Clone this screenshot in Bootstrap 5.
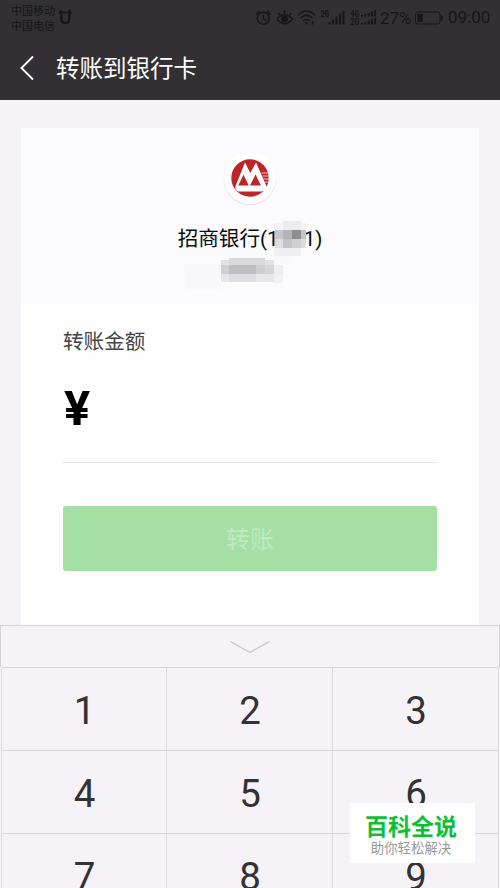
<!DOCTYPE html>
<html lang="zh-CN">
<head>
<meta charset="utf-8">
<meta name="viewport" content="width=device-width, initial-scale=1">
<title>转账到银行卡</title>
<link rel="stylesheet" href="https://cdn.jsdelivr.net/npm/bootstrap@5.3.0/dist/css/bootstrap.min.css">
<style>
body{font-family:Roboto,"Noto Sans CJK SC",sans-serif;background:#f5f3f7;color:#111}
.screen{width:500px;height:888px}
.topbar{height:100px;background:#333033}
.status{height:35px;color:#171517}
.carriers{font-size:11px;line-height:15px;padding:4px 0 0 11px;width:59px}
.alarm-u{margin-top:9px}
.status-right{padding-right:10px}
.battery-pct{font-size:17px;width:35px;padding-left:1px;line-height:20px}
.clock{font-size:17px;width:43px;padding-left:1px}
.status svg{flex:none;display:block}
.titlebar{height:65px;padding-left:19px}
.title{font-size:23.5px;line-height:34px;color:#fff;font-weight:400;margin-left:21px;padding-top:2px}
.panel{width:458px;height:497px;margin:28px auto 0 21px;background:#fefefe;border-radius:4px 4px 0 0}
.bank{height:176px;background:#fbfafd;padding-top:24px}
.logo-ring{width:52px;height:52px;background:#fff;box-shadow:0 1px 1px #dfdce2}
.bank-name{font-size:20.6px;line-height:30px;margin-top:20px;color:#0c0c0c}
.hidden-digits{width:25px}
.mosaic{left:164px;top:88px}
.form-part{padding:0 42px}
.amount-label{font-size:20.6px;line-height:30px;margin-top:23px;color:#454346}
.amount{height:106px;border-bottom:1px solid #e5e4e6;font-weight:700;font-size:49px;line-height:60px;padding-top:22px;padding-left:1px;color:#000}
.pay{height:65px;margin-top:43px;border-radius:3px;font-size:24px;padding-top:3px!important}
.pay:disabled{opacity:1;background:#a4dfa4;color:#c0eac0;border:0}
.keyboard{height:263px;background:#f5f3f7}
.collapse-key{height:42px;border:1px solid #d5d3d7;border-bottom:0}
.keys{grid-template-columns:165px 166px 166px;grid-auto-rows:83px;margin:0 1px;border-left:1px solid #dfdde1}
.key{border-top:1px solid #d8d6da;border-right:1px solid #dcdade;font-size:38.5px;line-height:1;color:#333134;padding:4px 0 0 1px}
.brand{left:350px;top:803px;width:125px;height:60px;background:#fff}
.brand-name{font-size:23px;line-height:26px;font-weight:700;color:#0dbf35;padding-top:12px;margin-left:-3px}
.brand-tag{font-size:13.4px;line-height:16px;color:#999;margin-left:-3px}
</style>
<script src="https://cdn.jsdelivr.net/npm/bootstrap@5.3.0/dist/js/bootstrap.bundle.min.js"></script>
</head>
<body>
<main class="screen position-relative overflow-hidden d-flex flex-column">
<header class="topbar flex-shrink-0">
  <div class="status d-flex">
    <div class="carriers text-nowrap">中国移动<br>中国电信</div>
    <svg class="alarm-u" width="14" height="16" viewBox="0 0 14 16" fill="none" stroke="currentColor" stroke-width="2.200"><path d="M0 4.500L3 1.500M9.500 1.500l3 3M2.300 4v6q0 4 4 4t4-4V4" /><path d="M2.500 3.500h7.500" stroke-width="1.600"/></svg>
    <div class="status-right d-flex align-items-center ms-auto">
      <svg width="21" height="20" viewBox="254 7 21 20" fill="none" stroke="currentColor" stroke-width="1.400"><circle cx="263.300" cy="17.300" r="6"/><path d="M263.300 13.300v4.200l3 2.300M256 13.500l3.500-3.500M267 10l3.500 3.500"/></svg>
      <svg width="21" height="20" viewBox="275 7 21 20" fill="none" stroke="currentColor" stroke-width="1.500"><path d="M277 18q7.500-8.500 15.500 0-7.500 9.500-15.500 0M278 12l2.500 2.500M284.500 9v4M291.500 12l-2.500 2.500"/><circle cx="284.600" cy="18" r="2.700" fill="currentColor"/></svg>
      <svg width="23" height="20" viewBox="296 7 23 20" fill="none" stroke="currentColor" stroke-width="1.500"><path d="M298 14q8.500-8 17 0M300.500 17q6-5.500 12 0M303 20q3.500-3 7 0"/><circle cx="306.500" cy="22.200" r="1.200" fill="currentColor" stroke="none"/><path d="M312.500 19.500v4"/></svg>
      <svg width="30" height="20" viewBox="319 7 30 20" fill="currentColor"><text x="320.500" y="15.500" font-size="9" font-weight="700" textLength="8.500" lengthAdjust="spacingAndGlyphs">2G</text><path d="M328.500 21h2v2.500h-2zM332 18.500h2v5h-2zM335.500 15.500h2v8h-2zM339 12.500h2v11h-2zM342.500 9.500h2v14h-2z"/></svg>
      <svg width="30" height="20" viewBox="349 7 30 20" fill="currentColor"><g font-size="9" font-weight="700"><text x="350.500" y="15.700" textLength="8.500" lengthAdjust="spacingAndGlyphs">4G</text><text x="350.500" y="24" textLength="8.500" lengthAdjust="spacingAndGlyphs">2G</text></g><path d="M361 14h2v1.500h-2zM364.300 13h2v2.500h-2zM367.600 12h2v3.500h-2zM370.900 10.500h2v5h-2zM374.200 9h2v6.500h-2zM361 22h2v1.500h-2zM364.300 21h2v2.500h-2zM367.600 19.500h2v4h-2zM370.900 18.200h2v5.300h-2zM374.200 17h2v6.500h-2z"/></svg>
      <span class="battery-pct">27%</span>
      <svg width="33" height="20" viewBox="414 7 33 20" fill="none" stroke="currentColor"><rect x="415.500" y="11" width="24.500" height="12" rx="2"/><path d="M417.300 13h5.500v8h-5.500zM440.500 14.500h2v5h-2z" fill="currentColor" stroke="none"/></svg>
      <span class="clock">09:00</span>
    </div>
  </div>
  <div class="titlebar d-flex align-items-center">
    <svg width="16" height="26" viewBox="0 0 16 26" fill="none" stroke="#fff" stroke-width="1.900"><path d="M14 1.500L2.500 13 14 24.500"/></svg>
    <h1 class="title mb-0">转账到银行卡</h1>
  </div>
</header>

<section class="panel flex-shrink-0">
  <div class="bank position-relative d-flex flex-column align-items-center rounded-top">
    <div class="logo-ring rounded-circle d-flex align-items-center justify-content-center">
      <svg width="38" height="38" viewBox="0 0 38 38"><circle cx="19" cy="19" r="18.700" fill="#bd2529"/><path d="M14 3.500L4.500 27q-.8 5 3.500 5.500h23q3-.5 5-4L25 3.500 19.300 14zM12.500 15.500L17.700 26.500H7.300zM24.500 15.500L30 26.500H19z" fill="#fff" fill-rule="evenodd"/><path d="M30.500 14h8M31.500 17h7M32.500 20h6M33.500 23h5" stroke="#fff" stroke-width="1.200" opacity=".7"/></svg>
    </div>
    <div class="bank-name d-flex">招商银行(1<span class="hidden-digits"></span>1)</div>
    <!-- masking blocks over the private digits and the holder name -->
    <svg class="mosaic position-absolute" width="130" height="82" viewBox="185 216 130 82" shape-rendering="crispEdges">
      <path fill="#f9f8fb" d="M185 265h36v25H185zM274 250h18v15h-18z"/>
      <path fill="#eeecf0" d="M283 221h18v9h-18z"/><path fill="#f4f3f5" d="M274 223h9v7h-9zM301 223h5v7h-5z"/>
      <path fill="#c7c6c8" d="M275 230h8v9h-8z"/><path fill="#b4b3b5" d="M283 230h9v9h-9z"/><path fill="#8e8d90" d="M292 230h9v9h-9z"/><path fill="#c3c2c5" d="M301 230h5v9h-5z"/>
      <path fill="#dedde0" d="M275 239h8v9h-8z"/><path fill="#c4c3c6" d="M283 239h9v9h-9z"/><path fill="#d0cfd2" d="M292 239h9v9h-9z"/><path fill="#dddce0" d="M301 239h5v9h-5z"/>
      <path fill="#f0eff2" d="M274 248h27v8h-27z"/>
      <path fill="#e2e1e4" d="M221 260h8v5h-8zM265 260h9v5h-9z"/><path fill="#dad9dc" d="M229 258h36v7h-36z"/>
      <path fill="#cfced1" d="M221 265h8v9h-8zM256 265h9v9h-9z"/><path fill="#bfbec1" d="M229 265h27v9h-27z"/><path fill="#d5d4d7" d="M265 265h9v9h-9z"/><path fill="#eeecf0" d="M274 265h9v9h-9z"/>
      <path fill="#e7e6e9" d="M221 274h8v8h-8zM256 274h18v8h-18z"/><path fill="#dedde0" d="M229 274h27v8h-27z"/><path fill="#f1f0f3" d="M274 274h9v9h-9z"/>
    </svg>
  </div>
  <div class="form-part">
    <div class="amount-label">转账金额</div>
    <div class="amount">¥</div>
    <button class="pay btn w-100 p-0" disabled>转账</button>
  </div>
</section>

<section class="keyboard flex-shrink-0">
  <div class="collapse-key d-flex align-items-center justify-content-center">
    <svg width="40" height="14" viewBox="0 0 40 14" fill="none" stroke="#c8c6ca" stroke-width="1.300"><path d="M.5 1.500L20 12.500 39.500 1.500"/></svg>
  </div>
  <div class="keys d-grid">
    <div class="key d-flex align-items-center justify-content-center">1</div>
    <div class="key d-flex align-items-center justify-content-center">2</div>
    <div class="key d-flex align-items-center justify-content-center">3</div>
    <div class="key d-flex align-items-center justify-content-center">4</div>
    <div class="key d-flex align-items-center justify-content-center">5</div>
    <div class="key d-flex align-items-center justify-content-center">6</div>
    <div class="key d-flex align-items-center justify-content-center">7</div>
    <div class="key d-flex align-items-center justify-content-center">8</div>
    <div class="key d-flex align-items-center justify-content-center">9</div>
  </div>
</section>

<aside class="brand position-absolute text-center">
  <div class="brand-name">百科全说</div>
  <div class="brand-tag">助你轻松解决</div>
</aside>
</main>
</body>
</html>
